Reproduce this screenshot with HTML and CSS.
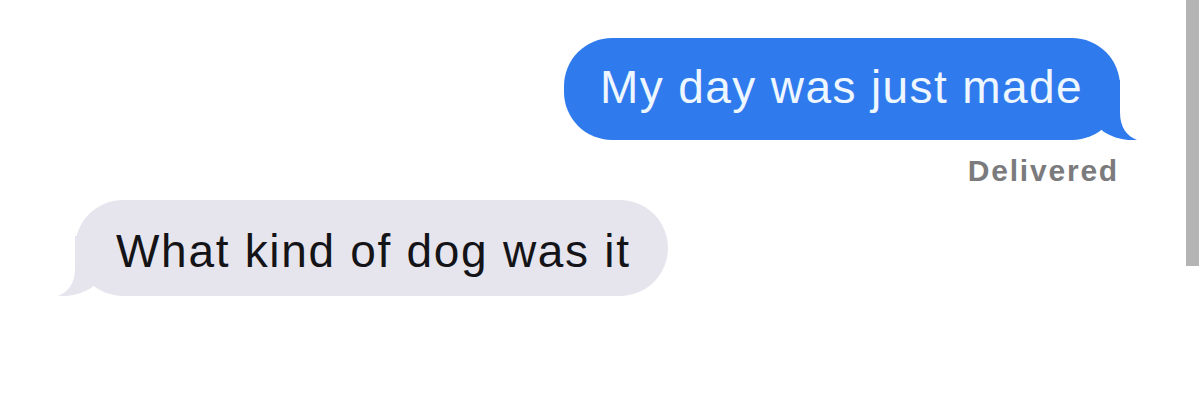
FILE: index.html
```html
<!DOCTYPE html>
<html>
<head>
<meta charset="utf-8">
<link rel="stylesheet" href="styles.css">
</head>
<body>
<div class="page">
  <div class="chat">
    <div class="row sent-row">
      <div class="bubble sent">
        My day was just made
        <svg class="tail tail-sent" width="50" height="60" viewBox="0 0 50 60"><path d="M30 0 L30 32 C30 48 37 56 47 60 C35 61 24 58 14 52 L0 40 L0 0 Z"/></svg>
      </div>
    </div>
    <div class="status">Delivered</div>
    <div class="row recv-row">
      <div class="bubble recv">
        What kind of dog was it
        <svg class="tail tail-recv" width="50" height="60" viewBox="0 0 50 60"><path d="M20 0 L20 32 C20 48 13 56 3 60 C15 61 26 58 36 52 L50 40 L50 0 Z"/></svg>
      </div>
    </div>
  </div>
  <div class="edge"></div>
</div>
</body>
</html>
```

FILE: styles.css
```css
html, body {
  margin: 0;
  padding: 0;
  background: #ffffff;
}

.page {
  display: flex;
  width: 1199px;
  height: 400px;
  overflow: hidden;
}

.chat {
  flex: 1;
  display: flex;
  flex-direction: column;
  padding-top: 38px;
  font-family: "Liberation Sans", Arial, sans-serif;
}

.row {
  display: flex;
}

.sent-row {
  justify-content: flex-end;
  padding-right: 66px;
}

.recv-row {
  justify-content: flex-start;
  padding-left: 75px;
  margin-top: 11px;
}

.bubble {
  position: relative;
  font-size: 46px;
  line-height: 54px;
  border-radius: 48px;
  white-space: nowrap;
}

.sent {
  background: #2f7bee;
  color: #eef6ff;
  letter-spacing: 1.4px;
  padding: 22px 37px 26px 36px;
}

.recv {
  background: #e6e5ee;
  color: #141418;
  letter-spacing: 1.7px;
  padding: 24px 37px 18px 41px;
}

.tail {
  position: absolute;
  bottom: 0;
}

.tail-sent {
  right: -20px;
  fill: #2f7bee;
}

.tail-recv {
  left: -20px;
  fill: #e6e5ee;
}

.status {
  align-self: flex-end;
  margin-right: 67px;
  margin-top: 13px;
  font-size: 30px;
  line-height: 36px;
  font-weight: bold;
  letter-spacing: 1.8px;
  color: #7b7b7d;
}

.edge {
  width: 13px;
  height: 266px;
  background: #b4b4b4;
  flex: none;
}
```
